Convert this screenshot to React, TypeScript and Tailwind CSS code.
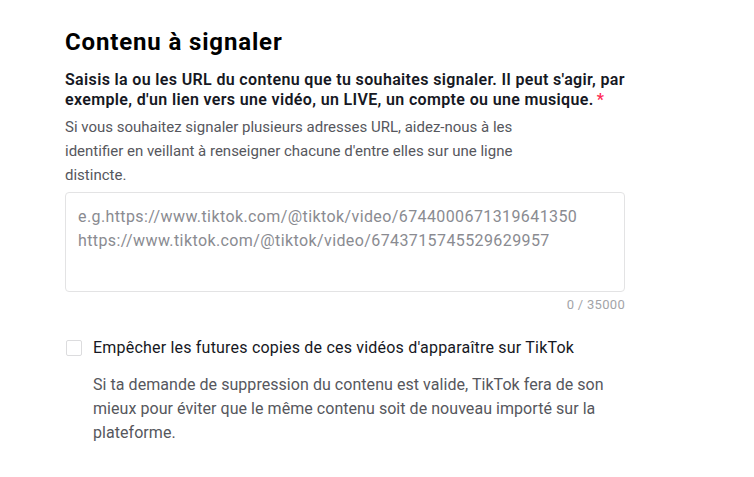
import React from "react";

export default function App() {
  return (
    <div
      className="min-h-[477px] w-[754px] bg-white pl-[65px] pt-[27px]"
      style={{ fontFamily: "Roboto, Arial, sans-serif" }}
    >
      <div className="w-[560px]">
        <h2 className="text-[24px] font-bold leading-[30px] tracking-[0.85px] text-black">Contenu à signaler</h2>
        <p className="mt-[13px] w-[570px] text-[16px] font-semibold leading-[20px] tracking-[0.35px] text-[#161823]">
          Saisis la ou les URL du contenu que tu souhaites signaler. Il peut s'agir, par exemple, d'un lien vers une vidéo, un LIVE, un compte ou une musique.
          <span className="ml-[3px] text-[#fe2c55]">*</span>
        </p>
        <p className="mt-[5px] w-[480px] text-[15px] leading-[24px] text-[#56575d]">
          Si vous souhaitez signaler plusieurs adresses URL, aidez-nous à les identifier en veillant à renseigner chacune d'entre elles sur une ligne distincte.
        </p>
        <textarea
          className="mt-[5px] block h-[100px] w-[560px] resize-none rounded-[4px] border border-[#e3e3e4] px-[12px] py-[12px] text-[16px] leading-[24px] tracking-[0.4px] text-[#161823] placeholder:text-[#8a8b91] outline-none"
          placeholder={"e.g.https://www.tiktok.com/@tiktok/video/6744000671319641350\nhttps://www.tiktok.com/@tiktok/video/6743715745529629957"}
        />
        <div className="mt-[4px] text-right text-[13px] leading-[18px] tracking-[0.3px] text-[#a3a4a8]">0 / 35000</div>
        <div className="mt-[22px] flex items-center">
          <span className="ml-[1px] box-border h-[16px] w-[16px] rounded-[2px] border border-[#dcdcde] bg-white" />
          <span className="ml-[11px] text-[16px] leading-[24px] tracking-[0.2px] text-[#161823]">
            Empêcher les futures copies de ces vidéos d'apparaître sur TikTok
          </span>
        </div>
        <p className="ml-[28px] mt-[13px] text-[16px] leading-[24px] tracking-[0.05px] text-[#56575d]">
          Si ta demande de suppression du contenu est valide, TikTok fera de son mieux pour éviter que le même contenu soit de nouveau importé sur la plateforme.
        </p>
      </div>
    </div>
  );
}
